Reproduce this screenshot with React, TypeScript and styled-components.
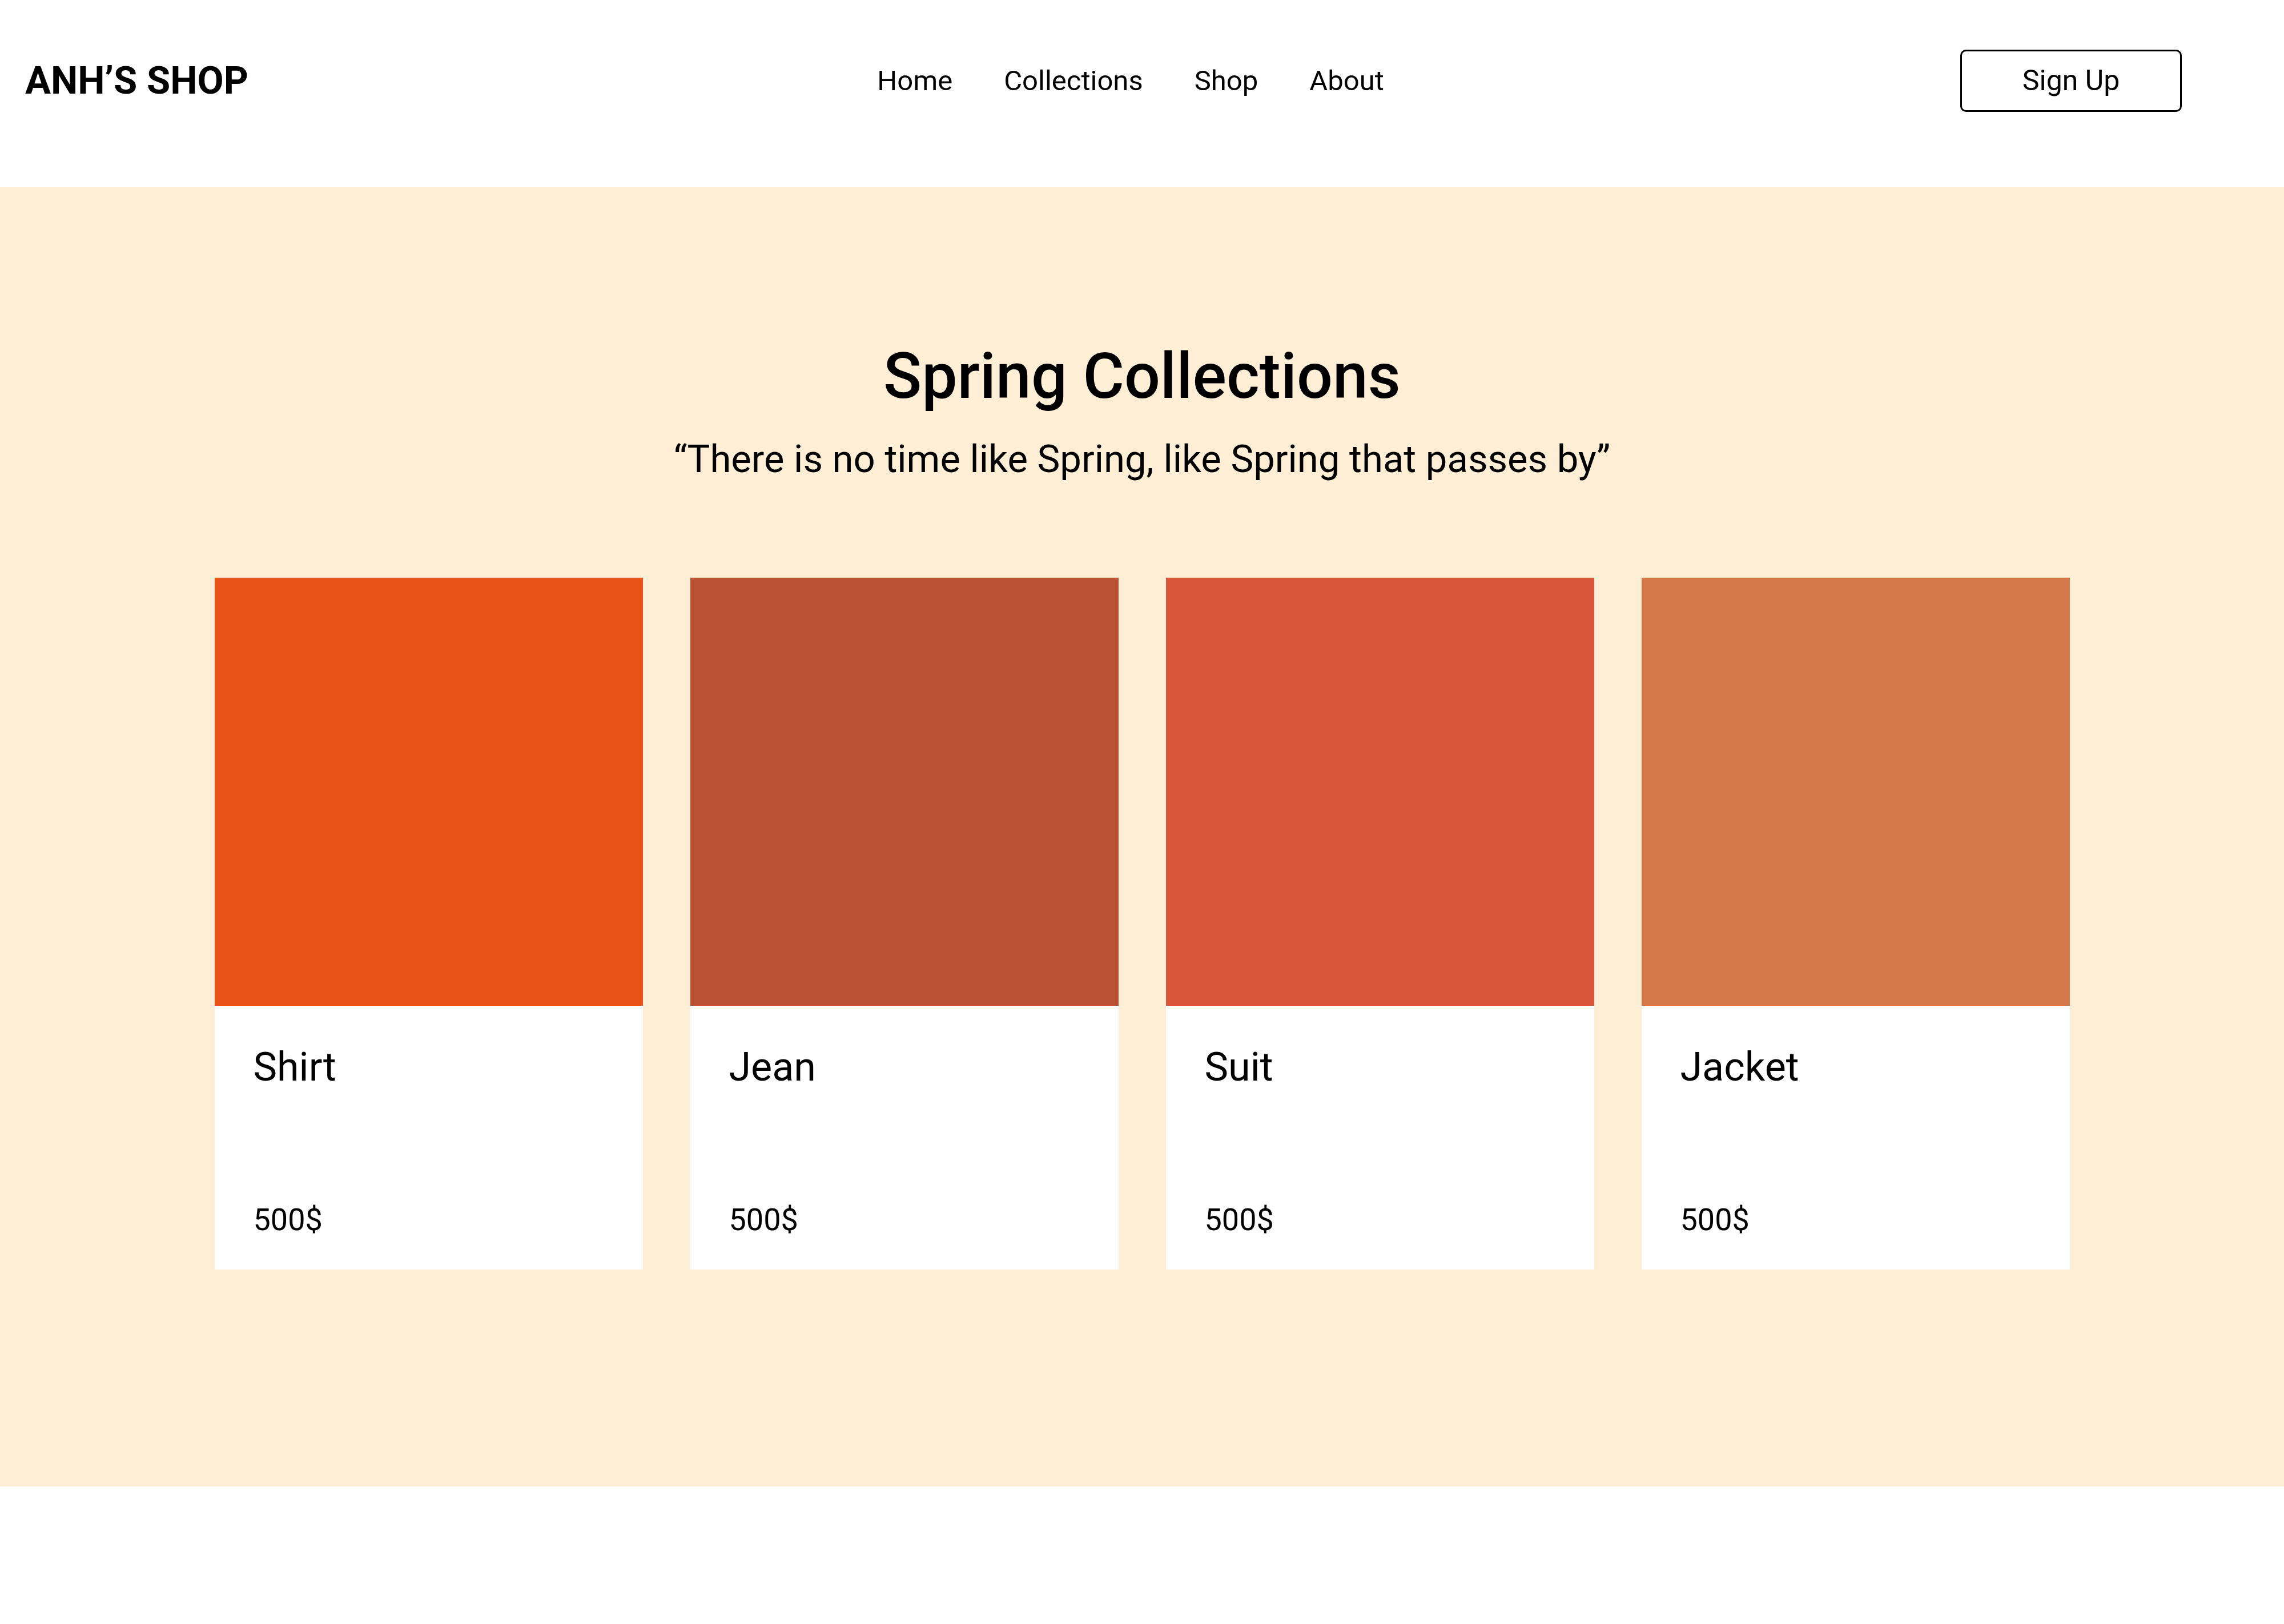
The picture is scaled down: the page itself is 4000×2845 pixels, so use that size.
import React from "react";
import styled, { createGlobalStyle } from "styled-components";

const GlobalStyle = createGlobalStyle`
  * {
    box-sizing: border-box;
  }

  body {
    margin: 0;
    background: #ffffff;
    color: #000000;
    font-family: Roboto, "Liberation Sans", sans-serif;
  }
`;

const products = [
  { name: "Shirt", price: "500$", color: "#e85418" },
  { name: "Jean", price: "500$", color: "#bd5133" },
  { name: "Suit", price: "500$", color: "#d9553b" },
  { name: "Jacket", price: "500$", color: "#d7784a" },
];

const navLinks = ["Home", "Collections", "Shop", "About"];

export default function App() {
  return (
    <>
      <GlobalStyle />
      <Page>
        <Header>
          <Logo>ANH’S SHOP</Logo>
          <Nav>
            {navLinks.map((link) => (
              <NavLink key={link} href="#">
                {link}
              </NavLink>
            ))}
          </Nav>
          <SignUp>Sign Up</SignUp>
        </Header>

        <Hero>
          <Title>Spring Collections</Title>
          <Quote>“There is no time like Spring, like Spring that passes by”</Quote>
          <Grid>
            {products.map((p) => (
              <Card key={p.name}>
                <Swatch $color={p.color} />
                <CardBody>
                  <ProductName>{p.name}</ProductName>
                  <Price>{p.price}</Price>
                </CardBody>
              </Card>
            ))}
          </Grid>
        </Hero>
      </Page>
    </>
  );
}

const Page = styled.div`
  width: 4000px;
  min-height: 2845px;
  background: #ffffff;
`;

const Header = styled.header`
  height: 328px;
  padding-bottom: 46px;
  display: grid;
  grid-template-columns: 1fr auto 1fr;
  align-items: center;
`;

const Logo = styled.div`
  justify-self: start;
  margin-left: 44px;
  font-size: 67px;
  font-weight: 700;
`;

const Nav = styled.nav`
  display: flex;
  align-items: center;
  gap: 90px;
  margin-right: 40px;
`;

const NavLink = styled.a`
  font-size: 49px;
  color: #000000;
  text-decoration: none;
`;

const SignUp = styled.button`
  justify-self: end;
  margin-right: 179px;
  width: 388px;
  height: 109px;
  border: 3px solid #000000;
  border-radius: 10px;
  background: #ffffff;
  font-family: Roboto, "Liberation Sans", sans-serif;
  font-size: 50px;
  color: #000000;
  cursor: pointer;
`;

const Hero = styled.section`
  background: #feeed6;
  padding: 266px 0 380px;
  display: flex;
  flex-direction: column;
  align-items: center;
`;

const Title = styled.h1`
  margin: 0;
  font-size: 111px;
  font-weight: 500;
`;

const Quote = styled.p`
  margin: 41px 0 0;
  font-size: 67px;
  font-weight: 400;
`;

const Grid = styled.div`
  margin-top: 169px;
  display: grid;
  grid-template-columns: repeat(4, 750px);
  gap: 83px;
`;

const Card = styled.article`
  background: #ffffff;
  display: flex;
  flex-direction: column;
`;

const Swatch = styled.div<{ $color: string }>`
  height: 750px;
  background: ${({ $color }) => $color};
`;

const CardBody = styled.div`
  height: 462px;
  padding: 66px 68px 56px;
  display: flex;
  flex-direction: column;
  justify-content: space-between;
`;

const ProductName = styled.h2`
  margin: 0;
  font-size: 70px;
  font-weight: 400;
`;

const Price = styled.span`
  font-size: 54px;
`;
